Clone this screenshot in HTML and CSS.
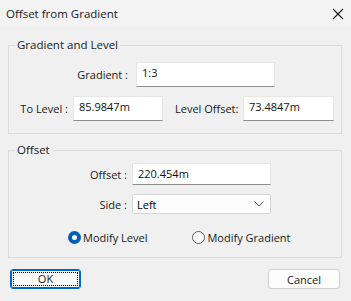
FILE: index.html
```html
<!DOCTYPE html>
<html>
<head>
<meta charset="utf-8">
<link rel="stylesheet" href="styles.css">
</head>
<body>
<div class="dialog">
  <div class="titlebar">
    <span class="title">Offset from Gradient</span>
    <svg class="close" width="12" height="12" viewBox="0 0 12 12"><path d="M1 1L11 11M11 1L1 11" stroke="#1a1a1a" stroke-width="1.1" fill="none"/></svg>
  </div>
  <div class="body">
    <div class="group g1">
      <span class="legend">Gradient and Level</span>
      <div class="row r-grad">
        <label class="lbl lbl-grad">Gradient :</label>
        <div class="input w139 h25">1:3</div>
      </div>
      <div class="row r-level">
        <label class="lbl lbl-to">To Level :</label>
        <div class="input w90 h25">85.9847m</div>
        <label class="lbl lbl-lo">Level Offset:</label>
        <div class="input w91 h25">73.4847m</div>
      </div>
    </div>
    <div class="group g2">
      <span class="legend">Offset</span>
      <div class="row r-off">
        <label class="lbl lbl-off">Offset :</label>
        <div class="input w139 h22">220.454m</div>
      </div>
      <div class="row r-side">
        <label class="lbl lbl-off">Side :</label>
        <div class="select">Left
          <svg class="chev" width="10" height="6" viewBox="0 0 10 6"><path d="M0.5 0.5L5 5L9.5 0.5" stroke="#555" stroke-width="1" fill="none"/></svg>
        </div>
      </div>
      <div class="row r-radio">
        <span class="radio checked"></span><span class="rlabel">Modify Level</span>
        <span class="radio r2"></span><span class="rlabel">Modify Gradient</span>
      </div>
    </div>
    <div class="buttons">
      <button class="btn ok"><span class="focus">OK</span></button>
      <button class="btn cancel">Cancel</button>
    </div>
  </div>
</div>
</body>
</html>
```
FILE: styles.css
```css
html, body {
  margin: 0;
  padding: 0;
  background: #f0f0f0;
}
body {
  font-family: "Open Sans", "Noto Sans", sans-serif;
  font-size: 11px;
  color: #000;
  width: 351px;
  height: 301px;
  overflow: hidden;
}
.titlebar {
  height: 27px;
  background: #f3f3f3;
  display: flex;
  align-items: center;
  justify-content: space-between;
  padding: 0 8px 0 6px;
}
.title {
  font-size: 11.5px;
  color: #1a1a1a;
  margin-top: -1px;
}
.close {
  margin-right: -1px;
}
.body {
  padding: 18px 9px 0 8px;
}
.group {
  position: relative;
  border: 1px solid #dcdcdc;
  box-sizing: border-box;
}
.legend {
  position: absolute;
  top: -9px;
  left: 6px;
  padding: 0 2px;
  background: #f0f0f0;
  line-height: 16px;
  font-size: 11.5px;
  color: #1a1a1a;
}
.g1 {
  height: 89px;
  padding-top: 16px;
}
.g2 {
  margin-top: 16px;
  height: 108px;
  padding-top: 12px;
}
.row {
  display: flex;
  align-items: center;
}
.lbl {
  color: #1a1a1a;
  white-space: nowrap;
}
.lbl-grad {
  width: 119px;
  text-align: right;
  margin-right: 8px;
}
.r-level {
  margin-top: 9px;
}
.lbl-to {
  width: 59px;
  text-align: right;
  margin-right: 5px;
}
.lbl-lo {
  margin-left: 12px;
  width: 62px;
  margin-right: 6px;
}
.lbl-off {
  width: 118px;
  text-align: right;
  margin-right: 5px;
}
.input {
  background: #fff;
  box-sizing: border-box;
  border: 1px solid #e6e6e6;
  border-bottom: 1px solid #8c8c8c;
  padding: 0 0 0 5px;
  display: flex;
  align-items: center;
  color: #111;
}
.h25 { height: 25px; padding-bottom: 5px; }
.h22 { height: 22px; padding-bottom: 1px; }
.w139 { width: 139px; }
.w90 { width: 90px; }
.w91 { width: 91px; }
.r-side {
  margin-top: 9px;
}
.select {
  width: 139px;
  height: 20px;
  box-sizing: border-box;
  background: #fdfdfd;
  border: 1px solid #d6d6d6;
  border-radius: 2px;
  padding: 0 0 0 4px;
  display: flex;
  align-items: center;
  justify-content: space-between;
}
.chev {
  margin-right: 6px;
}
.r-radio {
  margin-top: 16px;
  padding-left: 59px;
}
.radio {
  width: 13px;
  height: 13px;
  box-sizing: border-box;
  border-radius: 50%;
  border: 1px solid #5a5a5a;
  background: #fff;
  margin-right: 2px;
}
.radio.checked {
  border: 4px solid #005fb8;
  background: #fff;
}
.r2 {
  margin-left: 45px;
}
.rlabel {
  color: #1a1a1a;
}
.buttons {
  display: flex;
  justify-content: space-between;
  margin-top: 11px;
  padding: 0 2px 0 2px;
}
.btn {
  height: 20px;
  box-sizing: border-box;
  font-family: inherit;
  font-size: 11px;
  color: #1a1a1a;
  border-radius: 3px;
  padding: 0;
}
.ok {
  width: 71px;
  background: #fdfdfd;
  border: 1px solid #0067c0;
  box-shadow: inset 0 0 0 1px #0067c0;
  padding: 2px;
}
.focus {
  display: block;
  width: 100%;
  height: 100%;
  box-sizing: border-box;
  border: 1px dotted #000;
  text-align: center;
  line-height: 12px;
}
.cancel {
  width: 72px;
  background: #fdfdfd;
  border: 1px solid #d0d0d0;
}
```
